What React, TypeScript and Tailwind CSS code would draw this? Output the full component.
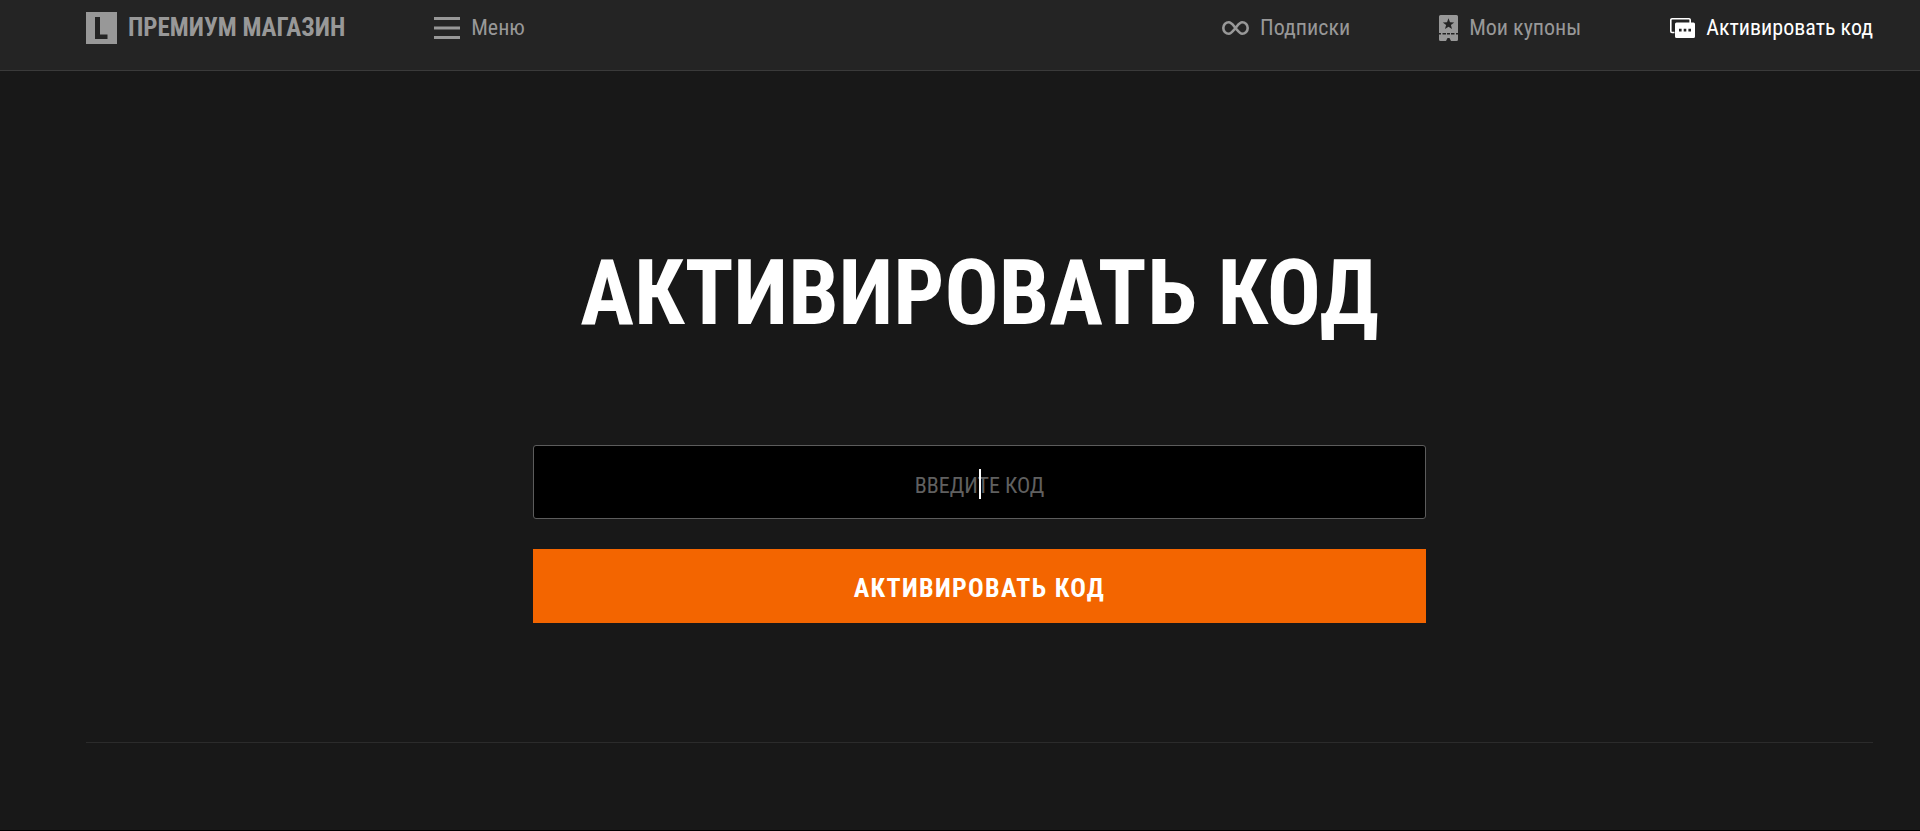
import React from 'react';

function LogoIcon() {
  return (
    <svg className="h-8 w-[31px]" viewBox="0 0 31 32" aria-hidden="true">
      <path
        fill="currentColor"
        fillRule="evenodd"
        d="M0 0h31v32H0zM9 5v22h12.500v-4.500H14V5z"
      />
    </svg>
  );
}

function MenuIcon() {
  return (
    <svg className="h-[22px] w-[26px]" viewBox="0 0 26 22" aria-hidden="true">
      <path fill="currentColor" d="M0 0h26v3H0zM0 9.500h26v3H0zM0 19h26v3H0z" />
    </svg>
  );
}

function InfinityIcon() {
  return (
    <svg className="h-[14px] w-[27px]" viewBox="0 0 27 14" aria-hidden="true">
      <path
        fill="none"
        stroke="currentColor"
        strokeWidth="2.6"
        d="M13.5 7C11 4 9.4 1.300 6.800 1.300a5.500 5.700 0 0 0 0 11.400C9.400 12.700 11 10 13.500 7s4.100-5.700 6.700-5.700a5.500 5.700 0 0 1 0 11.400C17.600 12.700 16 10 13.500 7z"
      />
    </svg>
  );
}

function CouponIcon() {
  return (
    <svg className="h-[26px] w-[19px]" viewBox="0 0 19 26" aria-hidden="true">
      <path
        fill="currentColor"
        fillRule="evenodd"
        d="M1.500 0h16A1.500 1.500 0 0 1 19 1.500v23a1.500 1.500 0 0 1-1.500 1.500H12l-1.500-3h-2L7 26H1.500A1.500 1.500 0 0 1 0 24.500v-23A1.500 1.500 0 0 1 1.500 0zM9.500 3.200L8 7.200l-4.200.200 3.300 2.600L6 14.100l3.500-2.300 3.500 2.300-1.100-4.100 3.300-2.600-4.200-.200zM0 18v1.400h2V18zM3.500 18v1.400H7V18zM8 18v1.400h3V18zM12 18v1.400h3.500V18zM17 18v1.400h2V18z"
      />
    </svg>
  );
}

function CodeIcon() {
  return (
    <svg className="h-5 w-[25px]" viewBox="0 0 25 20" aria-hidden="true">
      <path
        fill="none"
        stroke="currentColor"
        strokeWidth="1.600"
        d="M4.500 14.500H2A1.200 1.200 0 0 1 .8 13.300V2A1.200 1.200 0 0 1 2 .8h17A1.200 1.200 0 0 1 20.200 2v3"
      />
      <path
        fill="currentColor"
        fillRule="evenodd"
        d="M6.500 4.500h17A1.500 1.500 0 0 1 25 6v12.500a1.500 1.500 0 0 1-1.500 1.500h-17A1.500 1.500 0 0 1 5 18.500V6a1.500 1.500 0 0 1 1.500-1.500zM9 10.800v2.600h2.600v-2.600zM13.700 10.800v2.600h2.600v-2.600zM18.400 10.800v2.600H21v-2.600z"
      />
    </svg>
  );
}

const links = [
  { label: 'Подписки', icon: <InfinityIcon />, active: false },
  { label: 'Мои купоны', icon: <CouponIcon />, active: false },
  { label: 'Активировать код', icon: <CodeIcon />, active: true },
];

function Header() {
  return (
    <header className="flex h-[71px] items-start justify-between border-b border-[#3a3a3a] bg-[#242424] pt-3 pr-[47px] pl-[86px] text-[#989898]">
      <div className="flex items-center gap-[89px]">
        <a href="#" className="flex items-center gap-[11px]">
          <LogoIcon />
          <span className="text-[25px] leading-8 font-bold">ПРЕМИУМ МАГАЗИН</span>
        </a>
        <button type="button" className="flex items-center gap-[11px] text-[22px] leading-8">
          <MenuIcon />
          Меню
        </button>
      </div>
      <nav className="flex items-center gap-[89px] text-[22px] leading-8">
        {links.map(({ label, icon, active }) => (
          <a
            key={label}
            href="#"
            className={active ? 'flex items-center gap-[11px] text-white' : 'flex items-center gap-[11px]'}
          >
            {icon}
            {label}
          </a>
        ))}
      </nav>
    </header>
  );
}

export default function App() {
  return (
    <div className="flex min-h-screen flex-col border-b border-black bg-[#181818] font-['Roboto_Condensed','Roboto',sans-serif]">
      <Header />
      <main className="mr-[47px] ml-[86px] border-b border-[#2b2b2b] pt-[167px] pb-[119px]">
        <h1 className="text-center text-[90px] leading-[112px] font-bold text-white">АКТИВИРОВАТЬ КОД</h1>
        <form className="mx-auto mt-[95px] flex max-w-[893px] flex-col gap-[30px]">
          <div className="relative">
            <input
              type="text"
              aria-label="Введите код"
              placeholder="ВВЕДИТЕ КОД"
              className="block h-[74px] w-full rounded-[3px] border border-[#5c5c5c] bg-black pt-[6px] text-center text-[22px] text-white caret-white outline-none placeholder:text-[#606060]"
            />
            <span className="pointer-events-none absolute inset-x-0 top-6 mx-auto h-[30px] w-[2px] bg-white" />
          </div>
          <button
            type="button"
            className="h-[74px] bg-[#f36500] pt-1 text-[26px] font-bold tracking-wider text-white"
          >
            АКТИВИРОВАТЬ КОД
          </button>
        </form>
      </main>
    </div>
  );
}
